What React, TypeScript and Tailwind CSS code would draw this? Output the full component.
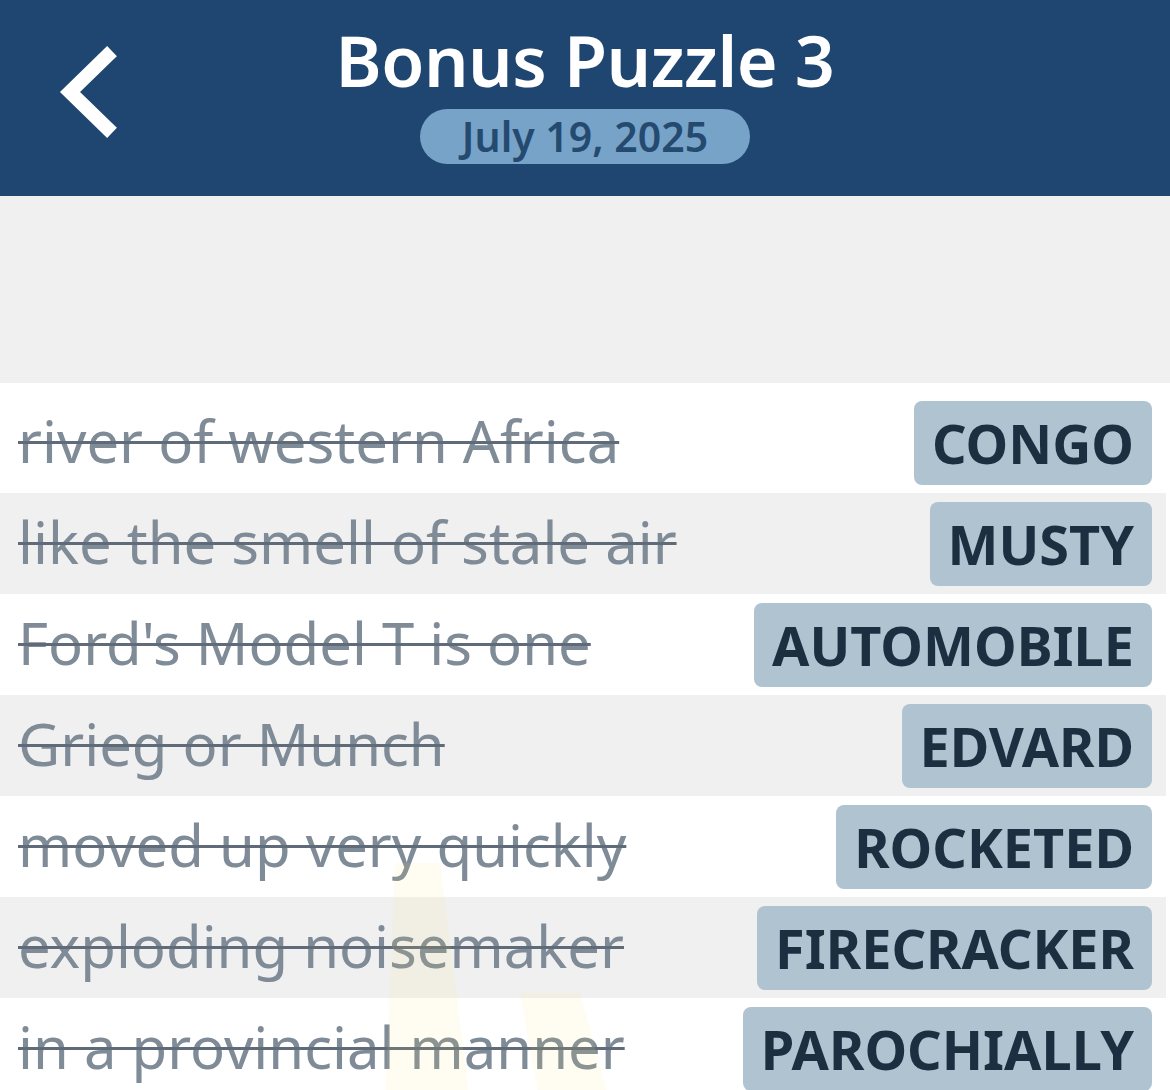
import React from "react";

const rows = [
  { clue: "river of western Africa", answer: "CONGO" },
  { clue: "like the smell of stale air", answer: "MUSTY" },
  { clue: "Ford's Model T is one", answer: "AUTOMOBILE" },
  { clue: "Grieg or Munch", answer: "EDVARD" },
  { clue: "moved up very quickly", answer: "ROCKETED" },
  { clue: "exploding noisemaker", answer: "FIRECRACKER" },
  { clue: "in a provincial manner", answer: "PAROCHIALLY" },
];

export default function App() {
  return (
    <div
      className="w-[1170px] h-[1090px] overflow-hidden bg-white relative"
      style={{ fontFamily: '"Noto Sans", "Open Sans", sans-serif' }}
    >
      <header className="h-[196px] bg-[#1e4670] relative flex flex-col items-center">
        <button className="absolute left-[52px] top-[44px] w-[72px] h-[96px] flex items-center justify-center">
          <svg width="72" height="96" viewBox="0 0 72 96">
            <polyline
              points="55,12 18,48 55,84"
              fill="none"
              stroke="#ffffff"
              strokeWidth="14"
              strokeLinecap="square"
              strokeLinejoin="miter"
            />
          </svg>
        </button>
        <h1 className="mt-[16px] text-[70px] leading-[88px] font-semibold text-white tracking-[-0.5px]">
          Bonus Puzzle 3
        </h1>
        <div className="mt-[5px] w-[330px] h-[55px] rounded-full bg-[#78a3c8] flex items-center justify-center">
          <span className="text-[41px] leading-none font-semibold text-[#244a70]">
            July 19, 2025
          </span>
        </div>
      </header>
      <div className="h-[187px] bg-[#f0f0f0]" />
      <div className="relative">
        {rows.map((r, i) => (
          <div
            key={i}
            className={
              "flex items-center justify-between pl-[18px] pr-[14px] w-[1166px] " +
              (i % 2 === 0 ? "bg-white" : "bg-[#f0f0f0]") +
              (i === 0 ? " h-[110px] pt-[10px]" : " h-[101px]")
            }
          >
            <span className="text-[58px] leading-none text-[#7f8b97] line-through decoration-[#5f6b78] decoration-[3px] whitespace-nowrap pb-[4px]">
              {r.clue}
            </span>
            <span className="h-[84px] px-[18px] rounded-[8px] bg-[#b0c3d1] flex items-center text-[54px] leading-none font-bold text-[#1c2f41] whitespace-nowrap">
              {r.answer}
            </span>
          </div>
        ))}
        <svg
          className="absolute left-0 top-0 pointer-events-none"
          width="1170"
          height="720"
          viewBox="0 0 1170 720"
        >
          <polygon points="395,480 440,480 470,720 385,720" fill="#ffe27a" opacity="0.1" />
          <polygon points="520,610 580,610 610,720 540,720" fill="#ffe27a" opacity="0.1" />
        </svg>
      </div>
    </div>
  );
}
